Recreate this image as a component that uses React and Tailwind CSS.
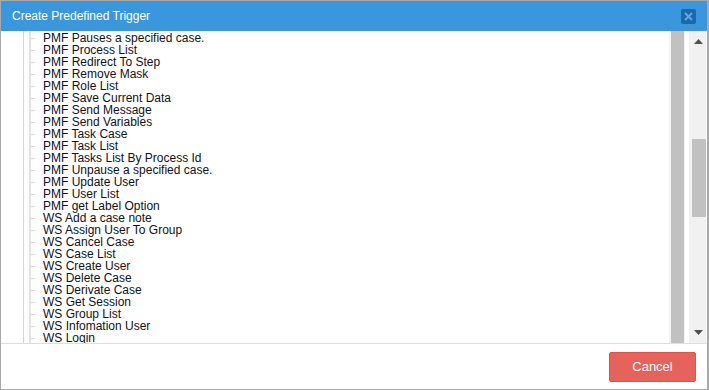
import React from 'react';

const items = [
  'PMF Pauses a specified case.',
  'PMF Process List',
  'PMF Redirect To Step',
  'PMF Remove Mask',
  'PMF Role List',
  'PMF Save Current Data',
  'PMF Send Message',
  'PMF Send Variables',
  'PMF Task Case',
  'PMF Task List',
  'PMF Tasks List By Process Id',
  'PMF Unpause a specified case.',
  'PMF Update User',
  'PMF User List',
  'PMF get Label Option',
  'WS Add a case note',
  'WS Assign User To Group',
  'WS Cancel Case',
  'WS Case List',
  'WS Create User',
  'WS Delete Case',
  'WS Derivate Case',
  'WS Get Session',
  'WS Group List',
  'WS Infomation User',
  'WS Login',
];

function TreeRow({ label }) {
  return (
    <div className="flex h-[12px] items-center">
      <div className="w-[22px] h-full" />
      <div className="w-[1px] h-full bg-[#d4d4d4]" />
      <div className="w-[5px] h-full" />
      <div className="w-[1px] h-full bg-[#e4e4e4]" />
      <div className="w-[1px] h-[1px] bg-[#d8d8d8] ml-[1px] w-[4px]" />
      <span className="ml-[8px] text-[12px] leading-[12px] text-[#111122] whitespace-nowrap">{label}</span>
    </div>
  );
}

export default function App() {
  return (
    <div className="w-[709px] h-[390px] bg-white border border-[#a9a9a9] border-r-2 flex flex-col overflow-hidden" style={{ fontFamily: '"Liberation Sans", Arial, sans-serif' }}>
      <div className="h-[30px] bg-[#3a97dd] flex items-center justify-between pl-[11px] pr-[11px] shrink-0">
        <span className="text-white text-[12px] leading-none">Create Predefined Trigger</span>
        <div className="w-[15px] h-[15px] bg-[#1e68a6] rounded-[2px] flex items-center justify-center">
          <svg width="9" height="9" viewBox="0 0 9 9">
            <path d="M1 1 L8 8 M8 1 L1 8" stroke="#5ba8e6" strokeWidth="2" />
          </svg>
        </div>
      </div>
      <div className="h-[312px] flex shrink-0">
        <div className="w-[668px] overflow-hidden pt-[1px] relative">
          <div className="absolute left-[22px] top-0 bottom-0 w-[1px] bg-[#d4d4d4]" />
          <div className="absolute left-[29px] top-0 bottom-0 w-[1px] bg-[#e4e4e4]" />
          {items.map((t) => (
            <TreeRow key={t} label={t} />
          ))}
        </div>
        <div className="w-[16px] h-full flex bg-[#f3f3f3] pl-[2px] pr-[1px]">
          <div className="w-[13px] h-full bg-[#c1c1c1]" />
        </div>
        <div className="w-[4px] h-full bg-white" />
        <div className="w-[17px] h-full bg-[#f1f1f1] flex flex-col items-center relative">
          <svg className="mt-[8px] ml-[2px]" width="9" height="5" viewBox="0 0 9 5">
            <path d="M0 5 L4.5 0 L9 5 Z" fill="#505050" />
          </svg>
          <div className="absolute left-[3px] right-0 top-[108px] h-[78px] bg-[#c1c1c1]" />
          <svg className="mt-auto mb-[8px] ml-[2px]" width="9" height="5" viewBox="0 0 9 5">
            <path d="M0 0 L9 0 L4.5 5 Z" fill="#505050" />
          </svg>
        </div>
      </div>
      <div className="h-[1px] bg-[#dedede] shrink-0" />
      <div className="flex-1 flex justify-end items-start pt-[8px] pr-[11px]">
        <button className="w-[87px] h-[30px] bg-[#e6635c] border border-[#d9534f] rounded-[2px] text-white text-[13px]">Cancel</button>
      </div>
    </div>
  );
}
